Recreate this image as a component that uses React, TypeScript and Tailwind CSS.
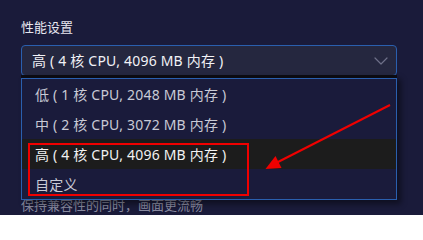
import { ChevronDown } from "lucide-react"

const options = [
  "低 ( 1 核 CPU, 2048 MB 内存 )",
  "中 ( 2 核 CPU, 3072 MB 内存 )",
  "高 ( 4 核 CPU, 4096 MB 内存 )",
  "自定义",
]

export default function App() {
  const selected = 2

  return (
    <div
      className="relative w-[423px] h-[215px] overflow-hidden bg-[#1a1b3a] pl-[21px] pr-[26px] pt-[17px]"
      style={{ fontFamily: '"Noto Sans", "Noto Sans CJK SC", sans-serif' }}
    >
      {/* Label */}
      <div className="text-[13px] leading-[20px] text-[#e6e6ee]">性能设置</div>

      {/* Select */}
      <div className="relative mt-[8px]">
        <div className="flex h-[31px] items-center justify-between rounded-[4px] border border-[#2a5fae] bg-[#25273f] pl-[10px] pr-[3px]">
          <span className="text-[14px] tracking-[0.2px] text-[#f2f2f6]">{options[selected]}</span>
          <ChevronDown size={24} strokeWidth={1.2} className="text-[#6e7088]" />
        </div>

        {/* Dropdown menu */}
        <div className="absolute left-0 right-0 top-[30px] z-10 shadow-[4px_4px_6px_rgba(0,0,0,0.45)]">
          <div className="h-[3px] bg-[#0b0b12]" />
          <div className="border border-[#2a5fae] bg-[#1a1b3b]">
            {options.map((opt, i) => (
              <div
                key={opt}
                className={
                  i === selected
                    ? "flex h-[30px] items-center pl-[13px] text-[14px] tracking-[0.2px] text-[#f2f2f2] bg-[#1c1c1c]"
                    : "flex h-[30px] items-center pl-[13px] text-[14px] tracking-[0.2px] text-[#c9cad6]"
                }
              >
                {opt}
              </div>
            ))}
          </div>
        </div>
      </div>

      {/* Description (under the menu) */}
      <div className="mt-[120px] text-[13px] leading-[18px] text-[#8a8ca2]">
        保持兼容性的同时，画面更流畅
      </div>

      {/* Annotation: red box */}
      <div className="absolute left-[28px] top-[143px] z-20 h-[53px] w-[221px] border-2 border-[#f00000]" />

      {/* Annotation: arrow */}
      <svg className="absolute left-0 top-0 z-20" width="423" height="215" viewBox="0 0 423 215">
        <line x1="390" y1="105" x2="277" y2="162.5" stroke="#f00000" strokeWidth="2" />
        <polygon points="265.5,169 275.5,156 281.5,168" fill="#f00000" />
      </svg>
    </div>
  )
}
